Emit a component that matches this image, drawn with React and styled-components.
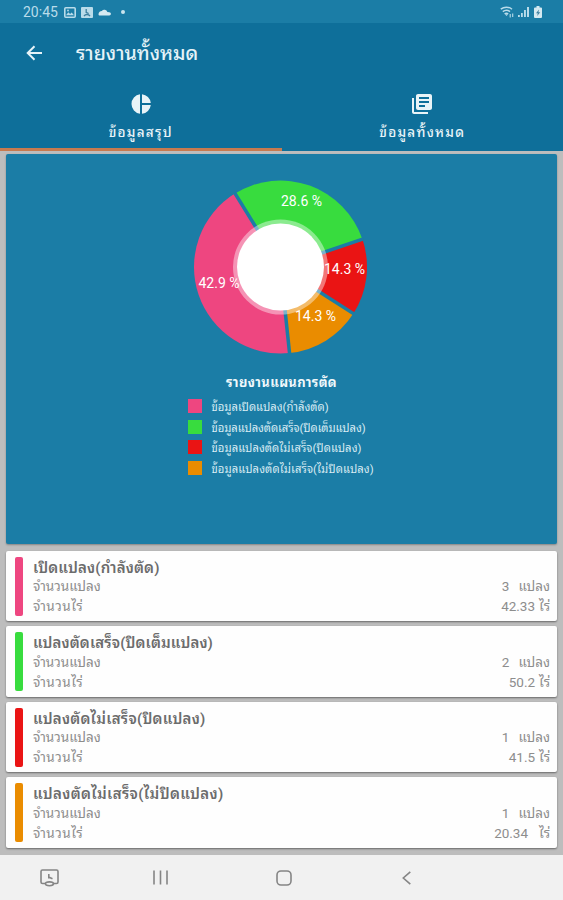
import styled, { createGlobalStyle } from "styled-components";

const GlobalStyle = createGlobalStyle`
  * { box-sizing: border-box; }
  body {
    margin: 0;
    background: #bdbdbd;
    font-family: Roboto, "Noto Sans Thai Looped", Loma, "Noto Sans Thai", "Noto Sans", sans-serif;
  }
`;

const colors = {
  pink: "#ee4680",
  green: "#38dc3e",
  red: "#ea1414",
  orange: "#ea8c00",
  primary: "#0e6f9a",
  panel: "#1b7da6",
};

const Screen = styled.div`
  width: 563px;
  height: 900px;
  display: flex;
  flex-direction: column;
  overflow: hidden;
  background: #bdbdbd;
`;

const StatusBar = styled.div`
  height: 23px;
  flex-shrink: 0;
  display: flex;
  align-items: center;
  justify-content: space-between;
  padding: 1px 21px 0 23px;
  background: ${colors.panel};
  color: #b9dcea;
`;

const StatusGroup = styled.div`
  display: flex;
  align-items: center;
  gap: ${({ $gap }) => $gap}px;
`;

const Clock = styled.span`
  width: 36px;
  font-size: 14px;
  line-height: 22px;
  white-space: nowrap;
`;

const Dot = styled.span`
  width: 4px;
  height: 4px;
  margin-left: 5px;
  border-radius: 50%;
  background: #c9e4ee;
`;

const AppBar = styled.header`
  height: 62px;
  flex-shrink: 0;
  display: flex;
  align-items: center;
  padding: 0 0 2px 26px;
  background: ${colors.primary};
  color: #e6f3f8;
`;

const Title = styled.h1`
  margin: 2px 0 0 33px;
  font-size: 19.5px;
  font-weight: 500;
  line-height: 30px;
  white-space: nowrap;
`;

const Tabs = styled.nav`
  height: 66px;
  flex-shrink: 0;
  display: flex;
  background: ${colors.primary};
`;

const Tab = styled.div`
  flex: 1;
  display: flex;
  flex-direction: column;
  align-items: center;
  padding-top: 8px;
  color: #e9f4f8;
  border-bottom: ${({ $active }) => ($active ? "3px solid #c77a4f" : "1px solid #0e6f9a")};
`;

const TabLabel = styled.span`
  margin-top: 6px;
  font-size: 13.5px;
  line-height: 22px;
  font-weight: 500;
  letter-spacing: 1.25px;
  white-space: nowrap;
`;

const Content = styled.main`
  flex: 1;
  display: flex;
  flex-direction: column;
  padding: 3px 6px 0;
`;

const ChartCard = styled.section`
  height: 390px;
  flex-shrink: 0;
  display: flex;
  flex-direction: column;
  align-items: center;
  padding-top: 26px;
  border-radius: 2px;
  background: ${colors.panel};
  box-shadow: 0 1px 2px rgba(0, 0, 0, 0.3);
`;

const ChartTitle = styled.h2`
  margin: 19px 0 0;
  font-size: 13px;
  font-weight: 700;
  line-height: 20px;
  letter-spacing: 0.35px;
  color: #f0f8fb;
`;

const Legend = styled.ul`
  width: 188px;
  margin: 3px 0 0;
  padding: 0;
  list-style: none;
`;

const LegendItem = styled.li`
  height: 20.6px;
  display: flex;
  align-items: center;
  gap: 10px;
  font-size: 11.3px;
  letter-spacing: ${({ $spacing }) => $spacing}px;
  white-space: nowrap;
  color: #d7ebf3;
`;

const Swatch = styled.span`
  width: 14px;
  height: 14px;
  flex-shrink: 0;
  background: ${({ $color }) => $color};
`;

const List = styled.div`
  display: flex;
  flex-direction: column;
  gap: 5px;
  margin-top: 6.5px;
`;

const Card = styled.article`
  height: 70.5px;
  display: flex;
  padding: 6px 7px 6px 9px;
  border-radius: 2px;
  background: #fefefe;
  box-shadow: 0 1px 2px rgba(0, 0, 0, 0.45);
`;

const Stripe = styled.span`
  width: 8px;
  height: 59px;
  border-radius: 2px;
  background: ${({ $color }) => $color};
`;

const CardBody = styled.div`
  flex: 1;
  margin-left: 10px;
`;

const CardTitle = styled.h3`
  margin: 0;
  height: 19.5px;
  font-size: 15px;
  font-weight: 600;
  line-height: 22px;
  letter-spacing: ${({ $spacing }) => $spacing}px;
  white-space: nowrap;
  color: #6c6c6c;
`;

const Line = styled.div`
  height: 20px;
  display: flex;
  justify-content: space-between;
  font-size: 13.5px;
  line-height: 20px;
  white-space: nowrap;
  color: #8d8d8d;
`;

const Label = styled.span`
  letter-spacing: ${({ $spacing }) => $spacing}px;
`;

const Value = styled.span`
  display: flex;
  gap: ${({ $gap }) => $gap}px;
`;

const NavBar = styled.footer`
  height: 45px;
  flex-shrink: 0;
  display: flex;
  align-items: center;
  background: #f1f1f1;
`;

const NavSvg = styled.svg`
  display: block;
  fill: none;
  stroke: #858585;
  stroke-width: 1.6;
  margin-left: ${({ $left }) => $left}px;
`;

const slices = [
  { color: colors.pink, value: 42.9, x: 219, y: 288, from: 84 },
  { color: colors.green, value: 28.6, x: 301.5, y: 205.5, from: 238.3 },
  { color: colors.red, value: 14.3, x: 344.5, y: 273.5, from: 341.2 },
  { color: colors.orange, value: 14.3, x: 315.5, y: 321, from: 392.6 },
];

const legend = [
  { color: colors.pink, text: "ข้อมูลเปิดแปลง(กำลังตัด)", spacing: 0 },
  { color: colors.green, text: "ข้อมูลแปลงตัดเสร็จ(ปิดเต็มแปลง)", spacing: -0.08 },
  { color: colors.red, text: "ข้อมูลแปลงตัดไม่เสร็จ(ปิดแปลง)", spacing: 0.04 },
  { color: colors.orange, text: "ข้อมูลแปลงตัดไม่เสร็จ(ไม่ปิดแปลง)", spacing: 0.08 },
];

const groups = [
  { color: colors.pink, title: "เปิดแปลง(กำลังตัด)", plots: "3", area: "42.33", gap: 4, spacing: 0.15 },
  { color: colors.green, title: "แปลงตัดเสร็จ(ปิดเต็มแปลง)", plots: "2", area: "50.2", gap: 4, spacing: 0.1 },
  { color: colors.red, title: "แปลงตัดไม่เสร็จ(ปิดแปลง)", plots: "1", area: "41.5", gap: 4, spacing: 0.22 },
  { color: colors.orange, title: "แปลงตัดไม่เสร็จ(ไม่ปิดแปลง)", plots: "1", area: "20.34", gap: 11, spacing: 0.33 },
];

const CX = 280.5;
const CY = 267;
const R = 86.5;

function point(deg, r) {
  const a = (deg * Math.PI) / 180;
  return [CX + r * Math.cos(a), CY + r * Math.sin(a)];
}

function Donut() {
  return (
    <svg width="175" height="174" viewBox="194 180 175 174" fontFamily="Roboto" fontSize="14">
      {slices.map(({ color, from, value }) => {
        const sweep = value * 3.6;
        const [x1, y1] = point(from, R);
        const [x2, y2] = point(from + sweep, R);
        return <path key={from} fill={color} d={`M${CX} ${CY}L${x1} ${y1}A${R} ${R} 0 0 1 ${x2} ${y2}Z`} />;
      })}
      {slices.map(({ from }) => {
        const [x, y] = point(from, R + 1);
        return <line key={from} x1={CX} y1={CY} x2={x} y2={y} stroke={colors.panel} strokeWidth="3.5" />;
      })}
      <circle cx={CX} cy={CY} r="47.5" fill="#fff" fillOpacity="0.42" />
      {slices.map(({ from, value, x, y }) => (
        <text key={from} x={x} y={y} textAnchor="middle" fill="#fff">
          {value} %
        </text>
      ))}
      <circle cx={CX} cy={CY} r="43.5" fill="#fff" />
    </svg>
  );
}

function StatusIcons() {
  return (
    <>
      <svg width="12" height="11" viewBox="0 0 12 11">
        <rect x="0.8" y="0.8" width="10.4" height="9.4" rx="1" fill="none" stroke="currentColor" strokeWidth="1.6" />
        <path d="M2 8.3 4.3 5.2l1.8 1.9 1.6-1.7L10 8.3z" fill="currentColor" />
        <circle cx="4" cy="3.5" r="0.9" fill="currentColor" />
      </svg>
      <svg width="12" height="11" viewBox="0 0 12 11">
        <rect width="12" height="11" rx="1" fill="currentColor" />
        <path d="M5.2 2v4M5.2 5.3l2.5 1.2M3 9c1.5-2 4.5-2 6 0" fill="none" stroke="#3c7f9f" strokeWidth="1.3" />
      </svg>
      <svg width="13" height="8" viewBox="0 0 13 8">
        <path d="M1.8 7.5h9.5a1.6 1.6 0 0 0 0-3.3L9.4 4A3.2 3.2 0 0 0 3.8 3C2 3 .8 4 .5 6c0 1 .5 1.5 1.3 1.5z" fill="#d5e9f1" />
      </svg>
    </>
  );
}

function SignalIcons() {
  return (
    <>
      <svg width="14" height="13" viewBox="0 0 14 13" fill="none" stroke="currentColor" strokeWidth="1.5">
        <path d="M.8 3.2c3.3-2.7 8-2.7 11.2 0M2.8 5.7c2.3-1.8 5-1.8 7.2 0M4.6 8c1.2-1 2.4-1 3.6 0" />
        <path d="M5 8.2h3L6.5 10z" fill="currentColor" stroke="none" />
        <path d="M10.2 8v3.5M12.7 7.5V11" strokeWidth="1.1" />
      </svg>
      <svg width="12" height="12" viewBox="0 0 12 12" fill="currentColor">
        <path d="M0 9h1.8v2H0zM3 7h1.8v4H3zM6 4h1.9v7H6zM9 1h2v10H9z" />
      </svg>
      <svg width="8" height="12" viewBox="0 0 8 12">
        <path d="M2.5 0h3v1.5H7a1 1 0 0 1 1 1V11a1 1 0 0 1-1 1H1a1 1 0 0 1-1-1V2.5a1 1 0 0 1 1-1h1.5z" fill="#d5e9f1" />
        <path d="M5 3.5 2 7.3h1.8L3.2 10 6.2 6.2H4.4z" fill="#3c7f9f" />
      </svg>
    </>
  );
}

export default function App() {
  return (
    <Screen>
      <GlobalStyle />
      <StatusBar>
        <StatusGroup $gap={5}>
          <Clock>20:45</Clock>
          <StatusIcons />
          <Dot />
        </StatusGroup>
        <StatusGroup $gap={4}>
          <SignalIcons />
        </StatusGroup>
      </StatusBar>

      <AppBar>
        <svg width="17" height="16" viewBox="0 0 17 16" fill="none" stroke="currentColor" strokeWidth="2">
          <path d="M16 8H2M8.5 1.2 1.7 8l6.8 6.8" />
        </svg>
        <Title>รายงานทั้งหมด</Title>
      </AppBar>

      <Tabs>
        <Tab $active>
          <svg width="22" height="22" viewBox="0 0 22 22" fill="currentColor">
            <path d="M10 1.2v19.6a9.9 9.9 0 0 1 0-19.6zM12 1.2A9.9 9.9 0 0 1 20.8 10H12zM12 12h8.8A9.9 9.9 0 0 1 12 20.8z" />
          </svg>
          <TabLabel>ข้อมูลสรุป</TabLabel>
        </Tab>
        <Tab>
          <svg width="24" height="22" viewBox="1 1 24 22" fill="currentColor">
            <path d="M5 6H3v14c0 1.1.9 2 2 2h14v-2H5zM21 2H9c-1.1 0-2 .9-2 2v12c0 1.1.9 2 2 2h12c1.1 0 2-.9 2-2V4c0-1.1-.9-2-2-2zm-1 9H10V9h10zm-4 4h-6v-2h6zm4-8H10V5h10z" />
          </svg>
          <TabLabel>ข้อมูลทั้งหมด</TabLabel>
        </Tab>
      </Tabs>

      <Content>
        <ChartCard>
          <Donut />
          <ChartTitle>รายงานแผนการตัด</ChartTitle>
          <Legend>
            {legend.map((item) => (
              <LegendItem key={item.text} $spacing={item.spacing}>
                <Swatch $color={item.color} />
                <span>{item.text}</span>
              </LegendItem>
            ))}
          </Legend>
        </ChartCard>

        <List>
          {groups.map((group) => (
            <Card key={group.title}>
              <Stripe $color={group.color} />
              <CardBody>
                <CardTitle $spacing={group.spacing}>{group.title}</CardTitle>
                <Line>
                  <Label $spacing={0}>จำนวนแปลง</Label>
                  <Value $gap={9}>
                    <span>{group.plots}</span>
                    <span>แปลง</span>
                  </Value>
                </Line>
                <Line>
                  <Label $spacing={0.5}>จำนวนไร่</Label>
                  <Value $gap={group.gap}>
                    <span>{group.area}</span>
                    <span>ไร่</span>
                  </Value>
                </Line>
              </CardBody>
            </Card>
          ))}
        </List>
      </Content>

      <NavBar>
        <NavSvg $left={40} width="19" height="18" viewBox="0 0 19 18">
          <path d="M5 14.5H2.5A1.5 1.5 0 0 1 1 13V2.5A1.5 1.5 0 0 1 2.5 1h14A1.5 1.5 0 0 1 18 2.5V13a1.5 1.5 0 0 1-1.5 1.5H14" />
          <ellipse cx="9.5" cy="14.8" rx="4" ry="1.9" />
          <path d="M8.8 5v4.5M8.5 8l4 1.7" />
        </NavSvg>
        <NavSvg $left={94} width="15" height="15" viewBox="0 0 15 15">
          <path d="M1 .5v14M7.5.5v14M14 .5v14" />
        </NavSvg>
        <NavSvg $left={108} width="16" height="16" viewBox="0 0 16 16">
          <rect x="1" y="1" width="14" height="14" rx="4" />
        </NavSvg>
        <NavSvg $left={110} width="9" height="14" viewBox="0 0 9 14">
          <path d="M8.3.8 1.3 7l7 6.2" />
        </NavSvg>
      </NavBar>
    </Screen>
  );
}
